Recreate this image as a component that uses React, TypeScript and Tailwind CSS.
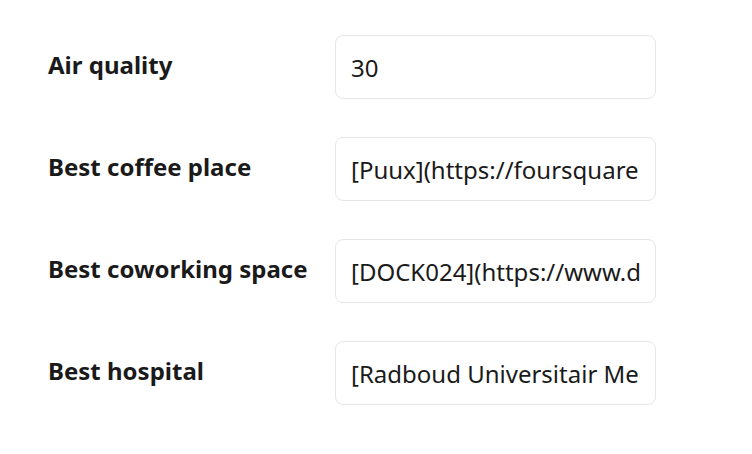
const rows = [
  { label: "Air quality", value: "30" },
  { label: "Best coffee place", value: "[Puux](https://foursquare.com/v/puux/4c2b5d1a)" },
  { label: "Best coworking space", value: "[DOCK024](https://www.dock024.nl)" },
  { label: "Best hospital", value: "[Radboud Universitair Medisch Centrum](https://www.radboudumc.nl)" },
];

export default function App() {
  return (
    <div
      className="w-[752px] h-[454px] bg-white pl-12 pt-[35px] text-[#1a1a1a]"
      style={{ fontFamily: "'Noto Sans', sans-serif" }}
    >
      <div className="flex flex-col gap-[38px]">
        {rows.map((r) => (
          <div key={r.label} className="flex items-center">
            <label className="w-[287px] shrink-0 text-[24px] font-bold leading-none -mt-1 whitespace-nowrap">
              {r.label}
            </label>
            <input
              readOnly
              value={r.value}
              className="w-[321px] h-[64px] rounded-lg border border-[#e6e6e6] bg-white px-[15px] pt-[1px] text-[24px] text-[#1a1a1a] outline-none"
              style={{ fontFamily: "'Noto Sans', sans-serif" }}
            />
          </div>
        ))}
      </div>
    </div>
  );
}
